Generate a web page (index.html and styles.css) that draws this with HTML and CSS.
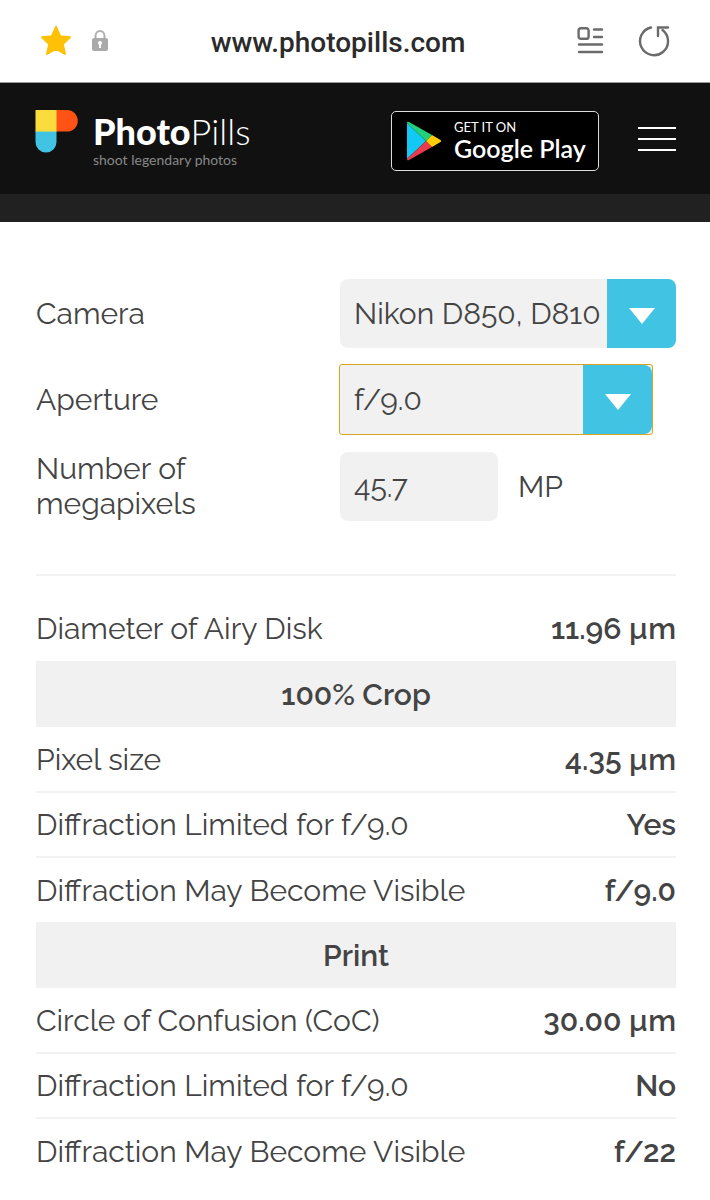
FILE: index.html
```html
<!DOCTYPE html>
<html lang="en">
<head>
  <meta charset="UTF-8" />
  <meta name="viewport" content="width=device-width, initial-scale=1" />
  <title>PhotoPills Diffraction Calculator</title>
  <link rel="stylesheet" href="styles.css">
</head>
<body>
  <div class="browser-bar">
    <button class="icon-button" type="button" aria-label="Bookmark">
      <svg width="32" height="32" viewBox="0 0 32 32"><path d="M16 2 L20.2 11.2 L30 12.2 L22.8 19 L25 29 L16 24 L7 29 L9.2 19 L2 12.2 L11.8 11.2 Z" fill="#ffc107" stroke="#ffc107" stroke-width="2" stroke-linejoin="round"/></svg>
    </button>
    <svg class="lock" width="18" height="24" viewBox="0 0 18 24" aria-hidden="true">
      <path d="M4.5 11V7a4.5 5 0 0 1 9 0v4" fill="none" stroke="#b0b0b0" stroke-width="2"/>
      <rect x="1" y="9" width="16" height="13" rx="2" fill="#aaa"/>
      <circle cx="9" cy="14" r="2" fill="#fff"/>
      <path d="M9 14v5" stroke="#fff" stroke-width="2"/>
    </svg>
    <span class="url">www.photopills.com</span>
    <button class="icon-button" type="button" aria-label="Reader mode">
      <svg width="28" height="30" viewBox="0 0 28 30" fill="none" stroke="#6b6b6b" stroke-width="2.4" stroke-linecap="round">
        <rect x="2.6" y="2.2" width="10" height="10.6" rx="2.4"/>
        <path d="M18 3.5h8M18 11h8M3 18.5h23M3 26h23"/>
      </svg>
    </button>
    <button class="icon-button reload" type="button" aria-label="Reload">
      <svg width="32" height="32" viewBox="0 0 32 32" fill="none" stroke="#6b6b6b" stroke-width="2.4" stroke-linecap="round">
        <path d="M13 2.5A14 14 0 1 0 24.5 5"/>
        <path d="M20 11V2.5H30"/>
      </svg>
    </button>
  </div>

  <header class="site-header">
    <a class="logo" href="#">
      <svg width="44" height="44" viewBox="0 0 44 44" aria-hidden="true">
        <path d="M22 0h11a10.8 10.8 0 0 1 0 21.6H22z" fill="#ff5315"/>
        <path d="M1.5 21h21v11a10.5 10.5 0 0 1-21 0z" fill="#41c4e3"/>
        <path d="M1.5 0h21v21.6h-21z" fill="#fadc3c"/>
      </svg>
      <span class="logo-text">
        <span class="logo-name"><strong>Photo</strong>Pills</span>
        <span class="logo-tagline">shoot legendary photos</span>
      </span>
    </a>
    <a class="play-badge" href="#">
      <svg width="36" height="40" viewBox="0 0 36 40" aria-hidden="true">
        <path d="M1 2v36l19-18z" fill="#12c8f4"/>
        <path d="M1 2Q1 0 3 1L26 14l-6 6z" fill="#22d07a"/>
        <path d="M1 38q0 2 2 1l23-13-6-6z" fill="#e93b4b"/>
        <path d="M26 14l8.5 5q1.500 1 0 2L26 26l-6-6z" fill="#ffcd08"/>
      </svg>
      <span class="play-text">
        <span class="play-small">GET IT ON</span>
        <span class="play-large">Google Play</span>
      </span>
    </a>
    <button class="menu-button" type="button" aria-label="Menu">
      <span></span>
      <span></span>
      <span></span>
    </button>
  </header>
  <div class="sub-header"></div>

  <main class="content">
    <form class="calculator">
      <label for="camera">Camera</label>
      <div class="select-box">
        <select id="camera">
          <option>Nikon D850, D810</option>
        </select>
        <span class="arrow"><svg width="26" height="16" viewBox="0 0 26 16"><path d="M0 0h26L13 16z" fill="#fff"/></svg></span>
      </div>

      <label for="aperture">Aperture</label>
      <div class="select-box select-box-short">
        <select id="aperture" class="active">
          <option>f/8.0</option>
          <option selected>f/9.0</option>
          <option>f/22</option>
        </select>
        <span class="arrow"><svg width="26" height="16" viewBox="0 0 26 16"><path d="M0 0h26L13 16z" fill="#fff"/></svg></span>
      </div>

      <label for="megapixels">Number of megapixels</label>
      <div class="input-box">
        <input id="megapixels" type="text" value="45.7">
        <span>MP</span>
      </div>
    </form>

    <table class="results">
      <tbody>
        <tr><td>Diameter of Airy Disk</td><td>11.96 µm</td></tr>
        <tr class="section"><th colspan="2">100% Crop</th></tr>
        <tr><td>Pixel size</td><td>4.35 µm</td></tr>
        <tr class="line"><td>Diffraction Limited for f/9.0</td><td>Yes</td></tr>
        <tr class="line"><td>Diffraction May Become Visible</td><td>f/9.0</td></tr>
        <tr class="section"><th colspan="2">Print</th></tr>
        <tr><td>Circle of Confusion (CoC)</td><td>30.00 µm</td></tr>
        <tr class="line"><td>Diffraction Limited for f/9.0</td><td>No</td></tr>
        <tr class="line"><td>Diffraction May Become Visible</td><td>f/22</td></tr>
      </tbody>
    </table>
  </main>
</body>
</html>
```

FILE: styles.css
```css
* {
  box-sizing: border-box;
}
body {
  margin: 0;
  font-family: Raleway, Lato, sans-serif;
  font-size: 30px;
  line-height: 35px;
  color: #444;
  background-color: #fff;
}
button {
  padding: 0;
  border: none;
  background: none;
  cursor: pointer;
}
svg {
  display: block;
}
.browser-bar {
  display: flex;
  align-items: center;
  height: 83px;
  padding: 0 40px;
  border-bottom: 1px solid #999;
}
.lock {
  margin-left: 19px;
}
.url {
  flex: 1;
  padding: 3px 9px 0 0;
  text-align: center;
  font-family: Roboto, sans-serif;
  font-size: 28px;
  font-weight: 500;
  color: #2b2b2b;
}
.reload {
  margin-left: 34px;
}
.site-header {
  display: flex;
  align-items: center;
  height: 111px;
  padding: 0 34px;
  background-color: #111;
}
.logo {
  display: flex;
  flex: 1;
  gap: 15px;
  color: #fff;
  font-family: Lato, sans-serif;
  text-decoration: none;
}
.logo-text {
  display: flex;
  flex-direction: column;
}
.logo-name {
  font-size: 36px;
  font-weight: 300;
  line-height: 42px;
}
.logo-name strong {
  font-weight: 900;
}
.logo-tagline {
  font-size: 14px;
  line-height: 16px;
  color: #888;
}
.play-badge {
  display: flex;
  align-items: center;
  gap: 12px;
  width: 208px;
  height: 60px;
  margin-top: 4px;
  padding-left: 14px;
  border: 1px solid #ddd;
  border-radius: 5px;
  background-color: #000;
  color: #fff;
  font-family: Lato, sans-serif;
  text-decoration: none;
}
.play-text {
  display: flex;
  flex-direction: column;
}
.play-small {
  font-size: 13px;
  line-height: 14px;
}
.play-large {
  font-size: 25px;
  font-weight: 600;
  line-height: 28px;
  white-space: nowrap;
}
.menu-button {
  display: flex;
  flex-direction: column;
  gap: 9px;
  width: 38px;
  margin-left: 39px;
}
.menu-button span {
  height: 2px;
  background-color: #fff;
}
.sub-header {
  height: 28px;
  background-color: #212121;
}
.content {
  padding: 57px 34px 17px 36px;
}
.calculator {
  display: grid;
  grid-template-columns: 19fr 21fr;
  row-gap: 17px;
  align-items: center;
  padding-bottom: 53px;
  border-bottom: 2px solid #f2f2f2;
}
.calculator label {
  padding-right: 40px;
}
.select-box {
  position: relative;
  min-width: 0;
}
.select-box-short {
  width: 93%;
}
.calculator select,
.calculator input {
  width: 100%;
  height: 69px;
  padding: 0 14px;
  border: none;
  border-radius: 8px;
  background-color: #f1f1f1;
  font: inherit;
  color: #444;
}
.calculator select {
  display: block;
  appearance: none;
  padding-right: 69px;
}
.calculator select.active {
  border-radius: 2px;
  outline: 1px solid #d9a520;
}
.arrow {
  position: absolute;
  top: 0;
  right: 0;
  display: flex;
  align-items: center;
  justify-content: center;
  width: 69px;
  height: 100%;
  padding-top: 4px;
  border-radius: 0 8px 8px 0;
  background-color: #41c4e3;
  pointer-events: none;
}
.input-box {
  display: flex;
  align-items: center;
  gap: 20px;
}
.calculator input {
  width: 47%;
}
.results {
  width: 100%;
  margin-top: 20px;
  border-collapse: collapse;
}
.results td,
.results th {
  height: 65px;
  padding: 0;
}
.results td:last-child,
.results th {
  font-weight: 600;
}
.results td:last-child {
  text-align: right;
}
.results .section {
  background-color: #f1f1f1;
}
.results .section th {
  height: 66px;
}
.results .line td {
  border-top: 2px solid #f2f2f2;
}
```
